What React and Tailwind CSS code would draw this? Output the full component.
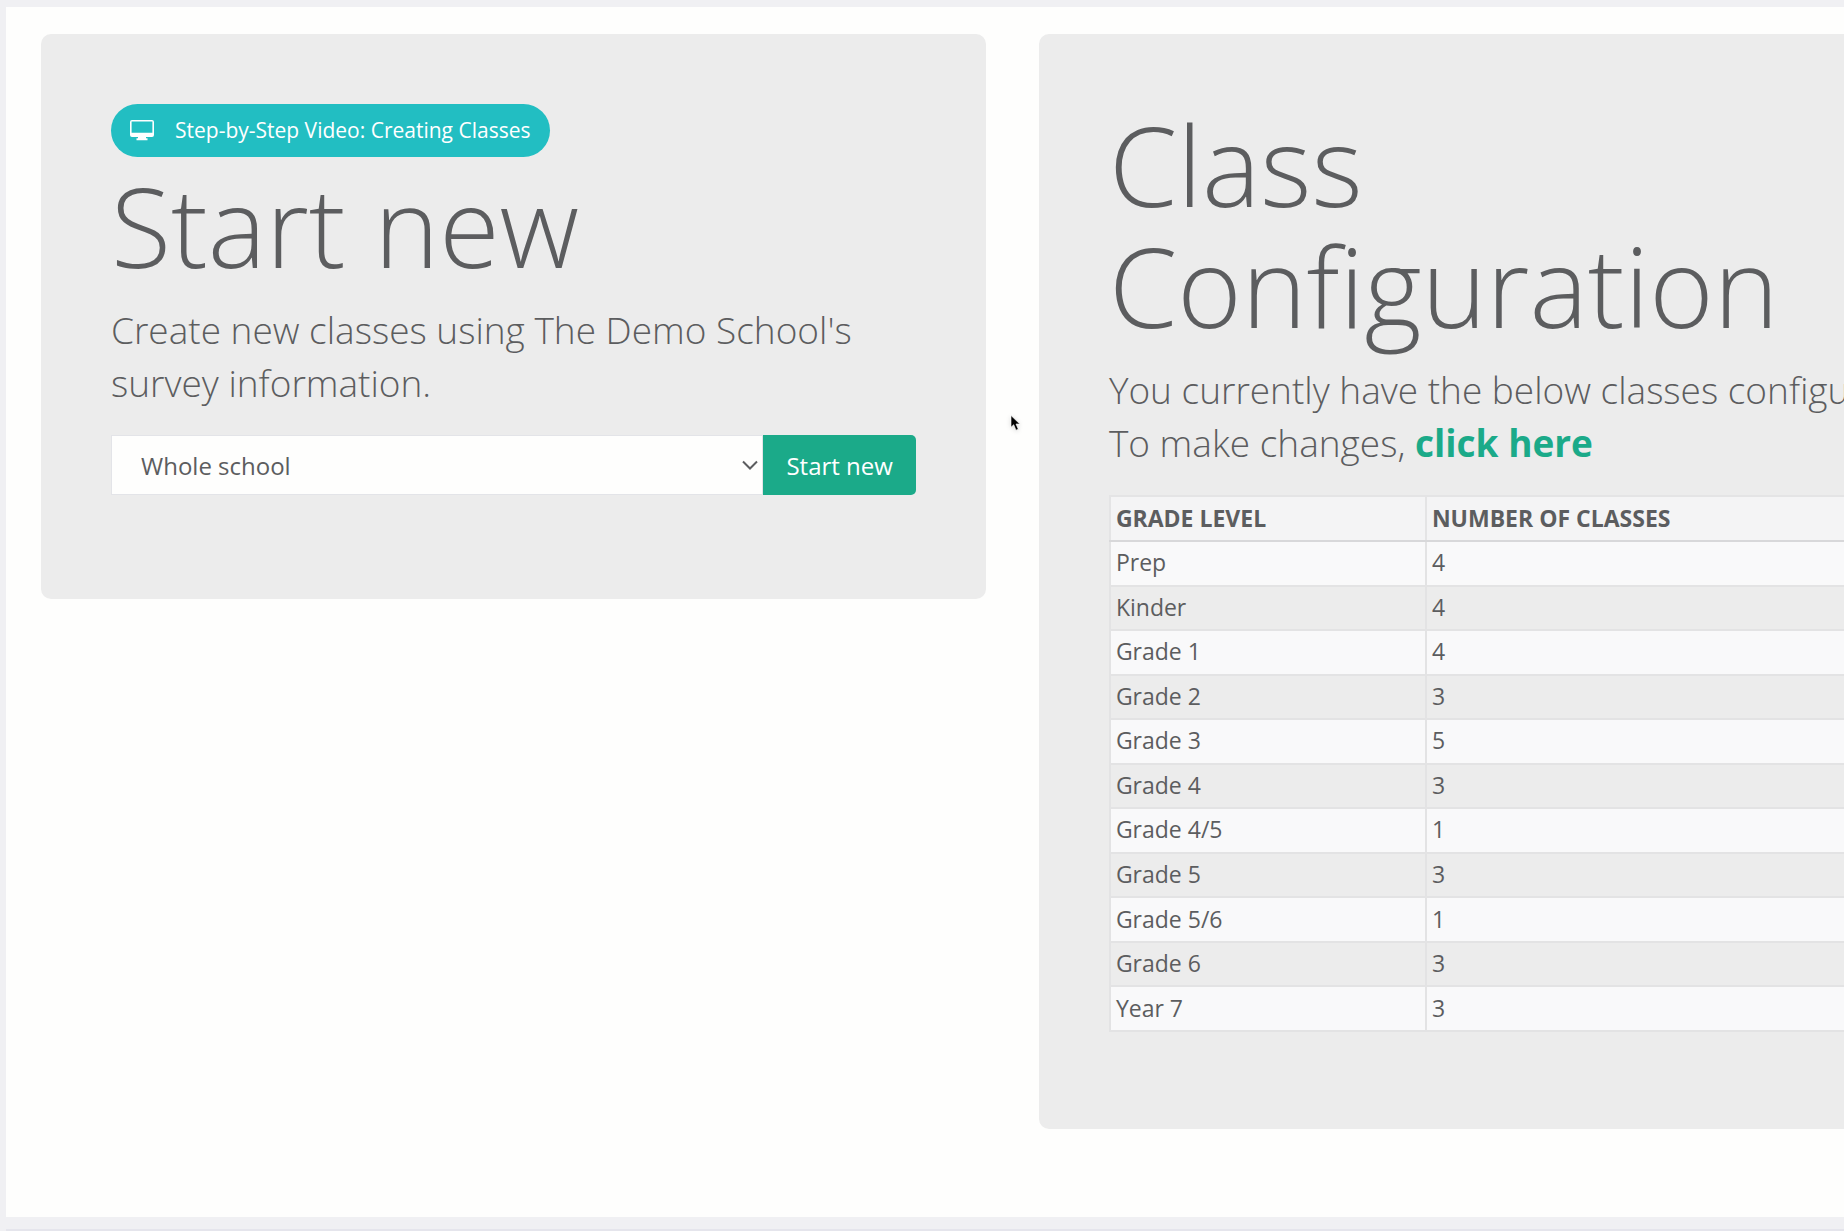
const classes = [
  ["Prep", 4],
  ["Kinder", 4],
  ["Grade 1", 4],
  ["Grade 2", 3],
  ["Grade 3", 5],
  ["Grade 4", 3],
  ["Grade 4/5", 1],
  ["Grade 5", 3],
  ["Grade 5/6", 1],
  ["Grade 6", 3],
  ["Year 7", 3],
];

function MonitorIcon() {
  return (
    <svg viewBox="0 0 24 21" className="h-[21px] w-6" fill="currentColor" aria-hidden="true">
      <path
        fillRule="evenodd"
        d="M2 0h20a2 2 0 0 1 2 2v13a2 2 0 0 1-2 2h-6v1.2h1.5v2h-11v-2H8V17H2a2 2 0 0 1-2-2V2a2 2 0 0 1 2-2ZM1.6 1.5v11.3h20.8V1.5Z"
      />
    </svg>
  );
}

function Pointer() {
  return (
    <svg
      viewBox="0 0 12 18"
      className="pointer-events-none absolute left-[1010px] top-[414px] h-[18px] w-3 drop-shadow-sm"
      aria-hidden="true"
    >
      <path
        d="M1 1.5V13.2L3.7 10.7 6 16.2 8.3 15.2 6 10H9.8Z"
        fill="#000"
        stroke="#fff"
        strokeWidth="0.6"
      />
    </svg>
  );
}

function Card({ children }) {
  return <section className="min-w-0 rounded-[10px] bg-[#ececec] p-[70px]">{children}</section>;
}

function Title({ children }) {
  return <h1 className="mb-[17px] text-[110px] leading-[121px] font-light">{children}</h1>;
}

function Lead({ children }) {
  return <p className="mb-[26px] text-[37px] leading-[53px] font-light">{children}</p>;
}

function StartNew() {
  return (
    <Card>
      <a
        href="#video"
        className="mb-2 flex h-[53px] w-fit items-center gap-[21px] rounded-full bg-[#22bec2] px-[19px] text-[21px] text-white"
      >
        <MonitorIcon />
        Step-by-Step Video: Creating Classes
      </a>
      <Title>Start new</Title>
      <Lead>Create new classes using The Demo School's survey information.</Lead>
      <form className="mb-[34px] flex h-[60px]" onSubmit={(e) => e.preventDefault()}>
        <div className="relative min-w-0 grow">
          <select
            aria-label="Class group"
            className="h-full w-full appearance-none border border-[#e3e4e8] bg-[#fefefd] pt-0.5 pr-10 pl-[29px] text-2xl"
          >
            <option>Whole school</option>
          </select>
          <svg
            viewBox="0 0 16 10"
            className="pointer-events-none absolute top-[25px] right-[5px] h-[10px] w-4"
            fill="none"
            stroke="currentColor"
            strokeWidth="2"
            aria-hidden="true"
          >
            <path d="M1 1.5 8 8.5 15 1.5" />
          </svg>
        </div>
        <button className="rounded-r-[5px] bg-[#1baa89] px-[23px] pt-0.5 text-2xl text-white">Start new</button>
      </form>
    </Card>
  );
}

function Configuration() {
  return (
    <Card>
      <Title>
        Class
        <br />
        Configuration
      </Title>
      <Lead>
        <span className="whitespace-nowrap">You currently have the below classes configured.</span>
        <br />
        To make changes,{" "}
        <a href="#changes" className="font-bold text-[#1baa89]">
          click here
        </a>
      </Lead>
      <table className="mb-[27px] h-[537px] w-full border-collapse text-left text-[23px] leading-8">
        <thead>
          <tr className="h-[45px] bg-[#f4f4f5]">
            <th className="w-[316px] border-2 border-[#e4e4e5] border-b-[#d8d8da] px-[5px] pb-0.5">GRADE LEVEL</th>
            <th className="border-2 border-[#e4e4e5] border-b-[#d8d8da] px-[5px] pb-0.5">NUMBER OF CLASSES</th>
          </tr>
        </thead>
        <tbody>
          {classes.map(([grade, count]) => (
            <tr key={grade} className="odd:bg-[#f9f9fa]">
              <td className="border-2 border-[#e3e3e4] px-[5px] pb-0.5">{grade}</td>
              <td className="border-2 border-[#e3e3e4] px-[5px] pb-0.5">{count}</td>
            </tr>
          ))}
        </tbody>
      </table>
    </Card>
  );
}

export default function App() {
  return (
    <div className="relative min-h-screen overflow-hidden bg-[#f0f0f3] pt-[7px] pl-1.5 font-['Open_Sans',sans-serif] text-[#5c5d5f]">
      <main className="grid w-[110%] grid-cols-2 items-start gap-[53px] bg-[#fefefd] pt-[27px] pr-11 pb-[88px] pl-[35px]">
        <StartNew />
        <Configuration />
      </main>
      <div className="mt-3 h-0.5 bg-[#e5e5ec]" />
      <Pointer />
    </div>
  );
}
